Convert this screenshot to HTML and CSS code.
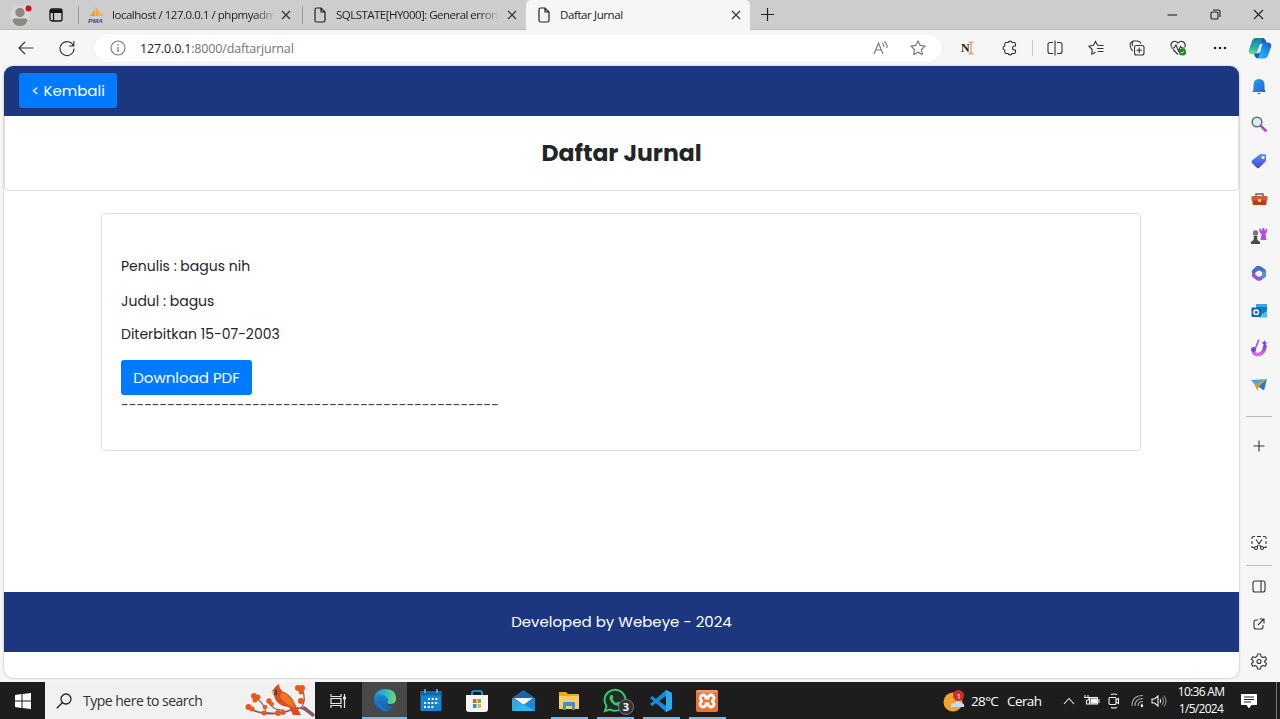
FILE: index.html
```html
<!DOCTYPE html>
<html lang="id">
<head>
<meta charset="utf-8">
<title>Daftar Jurnal</title>
<link rel="stylesheet" href="styles.css">
</head>
<body>
<div class="desktop">
  <header class="tabstrip">
    <div class="profile"><svg width="30" height="28" viewBox="0 0 30 28"><circle cx="15" cy="15" r="10.500" fill="#d9d7d4"/><circle cx="15" cy="11.500" r="4.700" fill="#8b8886"/><path d="M7.500 19.500Q7.500 17.500 10 17.500H20Q22.500 17.500 22.500 19.500Q21 25 15 25T7.500 19.500Z" fill="#8b8886"/><circle cx="23.500" cy="7.500" r="3" fill="#d80d1a"/></svg></div>
    <div class="workspaces"><svg width="14" height="14" viewBox="0 0 14 14" fill="none" stroke="#151515" stroke-width="1.300"><rect x="1" y="1" width="12" height="12" rx="2"/><path d="M1 2.500H13M1 4H13" stroke-width="1.800"/><path d="M4.500 4V13"/></svg></div>
    <div class="tab tab-first">
      <svg class="fav" width="16" height="16" viewBox="0 0 16 16"><path d="M1 9Q5 7 6 2L7 9Z" fill="#e99a2c"/><path d="M7.500 9V0Q12 4 12 9Z" fill="#f5a93c"/><path d="M12.500 9V4Q15 6 15 9Z" fill="#efb35b"/><text x="0" y="15.500" class="pma" textLength="15" lengthAdjust="spacingAndGlyphs">PMA</text></svg>
      <span class="tab-title fade t1">localhost / 127.0.0.1 / phpmyadm</span>
      <svg class="close" width="10" height="10" viewBox="0 0 10 10"><path d="M1 1L9 9M9 1L1 9"/></svg>
    </div>
    <div class="tab tab-second">
      <svg class="doc" width="12" height="16" viewBox="0 0 12 16"><path d="M2.500 1H7L11 5V13.500Q11 15 9.500 15H2.500Q1 15 1 13.500V2.500Q1 1 2.500 1ZM7 1V5H11"/></svg>
      <span class="tab-title fade t2">SQLSTATE[HY000]: General error:</span>
      <svg class="close" width="10" height="10" viewBox="0 0 10 10"><path d="M1 1L9 9M9 1L1 9"/></svg>
    </div>
    <div class="tab tab-active">
      <svg class="doc" width="12" height="16" viewBox="0 0 12 16"><path d="M2.500 1H7L11 5V13.500Q11 15 9.500 15H2.500Q1 15 1 13.500V2.500Q1 1 2.500 1ZM7 1V5H11"/></svg>
      <span class="tab-title t3">Daftar Jurnal</span>
      <svg class="close" width="10" height="10" viewBox="0 0 10 10"><path d="M1 1L9 9M9 1L1 9"/></svg>
    </div>
    <div class="newtab"><svg width="13" height="13" viewBox="0 0 13 13"><path d="M6.500 0V13M0 6.500H13" stroke="#222" stroke-width="1.200"/></svg></div>
    <div class="window-controls">
      <span><svg width="11" height="11" viewBox="0 0 11 11"><path d="M.5 6H10"/></svg></span>
      <span><svg width="11" height="11" viewBox="0 0 11 11"><rect x="1" y="3" width="7" height="7" rx="1.300"/><path d="M3 1H8.500Q10 1 10 2.500V8"/></svg></span>
      <span><svg width="11" height="11" viewBox="0 0 11 11"><path d="M1 1L10 10M10 1L1 10"/></svg></span>
    </div>
  </header>

  <nav class="toolbar">
    <span class="nav-btn back"><svg class="ic" width="16" height="14" viewBox="0 0 16 14"><path d="M15.500 7H1M7 1L1 7L7 13"/></svg></span>
    <span class="nav-btn"><svg class="ic" width="16" height="16" viewBox="0 0 16 16"><path d="M14.500 6A7 7 0 1 0 15 8.500M14.800 1V6H10"/></svg></span>
    <div class="address">
      <svg width="16" height="16" viewBox="0 0 16 16" fill="none" stroke="#777" stroke-width="1.100"><circle cx="8" cy="8" r="7"/><path d="M8 7V12M8 4V5.500" stroke-width="1.300"/></svg>
      <span class="url"><b>127.0.0.1</b>:8000/daftarjurnal</span>
      <svg class="gray read" width="16" height="16" viewBox="0 0 16 16"><path d="M1 14L5.500 3L10 14M2.700 10H8.500M9 3Q11 4 11 7M11 1.500Q14.500 3.500 14 8"/></svg>
      <svg class="gray" width="16" height="16" viewBox="0 0 16 16"><path d="M8 1L10.200 5.400L15 6.100L11.500 9.500L12.300 14.500L8 12.200L3.700 14.500L4.500 9.500L1 6.100L5.800 5.400Z"/></svg>
    </div>
    <div class="actions">
      <span><svg width="16" height="14" viewBox="0 0 16 14"><text x="1" y="11" class="serif-n" textLength="9">N</text><path d="M8.500 1Q11 1 11 3Q11 1 13.500 1M11 3V11M8.500 13Q11 13 11 11Q11 13 13.500 13" fill="none" stroke="#ef9b6c" stroke-width="1.400"/></svg></span>
      <span><svg class="ic" width="15" height="16" viewBox="0 0 15 16"><path d="M4 2.500H6.200A2 2 0 0 1 10 2.500H12Q13.500 2.500 13.500 4V6H12.500A2 2 0 0 0 12.500 10H13.500V12Q13.500 13.500 12 13.500H10A2 2 0 0 1 6.200 13.500H4Q2.800 13.500 2.800 12V10.200A2.200 2.200 0 0 1 2.800 5.900V4Q2.800 2.500 4 2.500Z"/></svg></span>
      <i></i>
      <span><svg class="ic" width="16" height="16" viewBox="0 0 16 16"><path d="M6 2.500H3Q1 2.500 1 4.500V11.500Q1 13.500 3 13.500H6M10 2.500H13Q15 2.500 15 4.500V11.500Q15 13.500 13 13.500H10M8 .5V15.500"/></svg></span>
      <span><svg class="ic" width="16" height="16" viewBox="0 0 16 16"><path d="M10.500 5.200H9.500L7.500 1.500L5.500 5.200L1 6.200L4.200 9.500L3.800 14L7.500 12.200M10.500 5.500H15.500M9 8.500H15.500M10 11.500H15.500"/></svg></span>
      <span><svg class="ic" width="16" height="16" viewBox="0 0 16 16"><rect x="5.500" y="5.500" width="9.500" height="9.500" rx="2"/><path d="M10.200 7.500V13M7.500 10.200H13M12 3.500Q11 1 8.500 1H4L1.500 3Q.5 6 2 8.500L3.500 11M4 1Q2.500 4 4 6"/></svg></span>
      <span><svg class="ic" width="17" height="16" viewBox="0 0 17 16"><path d="M1.500 7Q0 4 2.500 2T8 3Q11 0 13.500 2T15 7M3 9.500L8 14.500M1 8H4L6 5L8.500 11L10.500 6.500L12 8H15"/><circle cx="12.500" cy="12" r="3.600" fill="#16851e" stroke="none"/><path d="M10.800 12L12 13.300L14.200 10.900" stroke="#fff" stroke-width=".9"/></svg></span>
      <span><svg width="14" height="4" viewBox="0 0 14 4" fill="#222"><circle cx="2" cy="2" r="1.300"/><circle cx="7" cy="2" r="1.300"/><circle cx="12" cy="2" r="1.300"/></svg></span>
      <span class="copilot"><svg width="24" height="22" viewBox="0 0 24 22"><defs><linearGradient id="ca" x2="0" y2="1"><stop stop-color="#18809c"/><stop offset=".55" stop-color="#20a9b5"/><stop offset="1" stop-color="#78e07b"/></linearGradient><linearGradient id="cb" x1="1" x2="0" y2="1"><stop stop-color="#1659c8"/><stop offset=".5" stop-color="#2298f0"/><stop offset="1" stop-color="#25c5f6"/></linearGradient></defs><path d="M8 1H15Q17 1 18 5.500H15.500Q13.500 5.500 12.700 8L10.500 14.500Q9.500 17 6 17H3Q0 16.500 1 12.500L4 4Q5 1 8 1Z" fill="url(#ca)"/><path d="M16 21.500H9.500Q7 21 6 17Q9.500 17 10.500 14.500L12.700 8Q13.500 5.500 16 5.500H20.500Q24 6 23 10L20 18.500Q19 21.500 16 21.500Z" fill="url(#cb)"/><path d="M6 16.500H10.500L12 13.500L10.500 20Q10 21.500 8.500 21Q7 20 6 16.500Z" fill="#1457ba"/><path d="M14 1Q17.500 1 18.500 6H14.500L12.500 9Z" fill="#0e62ca"/><path d="M11.500 8L14.500 6L12 15L9 16.500Z" fill="#f4fbff"/></svg></span>
    </div>
  </nav>

  <div class="workspace">
    <main class="page">
      <div class="page-nav"><a class="btn back-link">&lt; Kembali</a></div>
      <section class="title-card"><h1>Daftar Jurnal</h1></section>
      <section class="journal-card">
        <p class="author">Penulis : bagus nih</p>
        <p class="title">Judul : bagus</p>
        <p class="date">Diterbitkan 15-07-2003</p>
        <a class="btn download">Download PDF</a>
        <p class="dashes">-------------------------------------------------</p>
      </section>
      <footer class="footer">Developed by Webeye - 2024</footer>
    </main>

    <aside class="sidebar">
      <span><svg width="16" height="18" viewBox="0 0 16 18"><defs><linearGradient id="bell" x2="1" y2="1"><stop stop-color="#28a7e8"/><stop offset="1" stop-color="#2859df"/></linearGradient></defs><path d="M8 1Q13.500 1 13.500 7V11L14.500 14H1.500L2.500 11V7Q2.500 1 8 1Z" fill="url(#bell)"/><path d="M6 15H10Q8 17.500 6 15Z" fill="#666"/></svg></span>
      <span><svg width="16" height="16" viewBox="0 0 16 16"><path d="M9.500 9.500L11 11" stroke="#666" stroke-width="2"/><path d="M11 11L14.500 14.500" stroke="#bc44ce" stroke-width="2.800" stroke-linecap="round"/><circle cx="6" cy="6" r="4.800" fill="#d7eefa" stroke="#6a6a6a" stroke-width="1.500"/></svg></span>
      <span><svg width="16" height="16" viewBox="0 0 16 16"><defs><linearGradient id="tag" x2="0" y2="1"><stop stop-color="#4c93ff"/><stop offset="1" stop-color="#4b46cf"/></linearGradient></defs><path d="M8 2Q9 1 11 1L15 1.500V7Q15 8 14 9L8.500 14.500Q7 16 5.500 14.500L1 10Q0 8.500 1 7.500Z" fill="url(#tag)"/><circle cx="12" cy="4.500" r="1.700" fill="#f7e5a6"/></svg></span>
      <span><svg width="17" height="16" viewBox="0 0 17 16"><path d="M5 6V3H12V6" fill="none" stroke="#666" stroke-width="1.500"/><rect x=".5" y="5" width="16" height="5" rx="1.200" fill="#d35b38"/><path d="M1.500 9.500H15.500V13Q15.500 14 14 14H3Q1.500 14 1.500 13Z" fill="#b83b18"/><rect x="7" y="8" width="3" height="3" rx=".6" fill="#f1d1a1"/></svg></span>
      <span><svg width="18" height="18" viewBox="0 0 18 18"><path d="M9 2L11 1.500V3.500L12.500 3V1H14.500V3L16 3.500V1.500L17.500 2L16.500 6L15.500 7L16.500 13H10.500L11.500 7L10 6Z" fill="#b54cea"/><circle cx="5.500" cy="6" r="2.700" fill="#777"/><path d="M3 9H8L7 10L7.500 13L10 15V17H1V15L3.500 13L4 10Z" fill="#4b4b4b"/></svg></span>
      <span><svg width="16" height="17" viewBox="0 0 16 17"><path d="M5 1.500Q7 0 10 1.500L15 5L12 8L8 5.500L4 8V12L1 10.500V5.500Z" fill="#446fc9"/><path d="M15 5V11.500L10 15.500H7L6 12L11 10V7Z" fill="#5790e5"/><path d="M1 7.500V11.500L6 15.500H9.500L12 13L8 12L4 9Z" fill="#9c55cf"/><path d="M8 5.500L11 7V10L8 12L5 10V7Z" fill="#f7f7fb"/></svg></span>
      <span><svg width="17" height="16" viewBox="0 0 17 16"><rect x="5" y="1" width="11" height="13" fill="#35a7e7"/><path d="M5 4H16V9L10 14H5Z" fill="#1479c7"/><path d="M8 13L16 8V14.500H8Z" fill="#49c4ef"/><rect x=".5" y="4.500" width="9.500" height="9.500" rx="1" fill="#0869b7"/><circle cx="5.200" cy="9.200" r="2.300" fill="none" stroke="white" stroke-width="1.500"/></svg></span>
      <span><svg width="18" height="18" viewBox="0 0 18 18"><defs><linearGradient id="drop" x2="0" y2="1"><stop stop-color="#7548d6"/><stop offset="1" stop-color="#df69ef"/></linearGradient></defs><path d="M8.500 1.500L6 8" fill="none" stroke="#b164e3" stroke-width="2" stroke-linecap="round"/><path d="M4 10Q2 15 7 15.500T14 11L15 7" fill="none" stroke="url(#drop)" stroke-width="3.700" stroke-linecap="round"/><circle cx="3.500" cy="10.500" r="2.500" fill="#7548d6"/><path d="M14.500 1L15.300 3L17.500 4L15.300 5L14.500 7L13.500 5L11.500 4L13.500 3Z" fill="#7046dd"/></svg></span>
      <span><svg width="16" height="15" viewBox="0 0 16 15"><path d="M0 2L16 1L4 7Z" fill="#43a7e3"/><path d="M7 8.500L16 1L13 12.500Z" fill="#2778d1"/><path d="M3.500 6.500L16 1L7.500 8.500L6.500 13Z" fill="#d09b31"/></svg></span>
      <i class="side-rule"></i>
      <span class="plus"><svg class="ic" width="12" height="12" viewBox="0 0 12 12"><path d="M6 .5V11.500M.5 6H11.500"/></svg></span>
      <div class="side-bottom">
        <span><svg class="ic" width="16" height="16" viewBox="0 0 16 16"><path d="M1 4V2.500Q1 1.500 2.500 1.500H4M6 1.500H10M12 1.500H13.500Q15 1.500 15 3V4M1 6V9M15 6V9M1 11V12.500H3.500M15 11V12.500H12.500M5 4.500L10 12M11 4.500L6 12"/><circle cx="5" cy="13" r="1.500"/><circle cx="11" cy="13" r="1.500"/></svg></span>
        <i class="side-rule"></i>
        <span><svg class="ic" width="14" height="13" viewBox="0 0 14 13"><rect x="1" y="1" width="12" height="11" rx="2"/><path d="M9 1V12"/></svg></span>
        <span><svg class="ic" width="12" height="12" viewBox="0 0 12 12"><path d="M5 2H3Q1 2 1 4V9Q1 11 3 11H8Q10 11 10 9V7M6.500 1H11V5.500M11 1L5 7"/></svg></span>
        <span><svg class="ic" width="16" height="17" viewBox="0 0 16 17"><path d="M6.500 1H9.500L10 3.500L12 4.600L14.300 3.800L15.500 6.300L13.700 8V9L15.500 10.700L14.300 13.200L12 12.400L10 13.500L9.500 16H6.500L6 13.500L4 12.400L1.700 13.200L.5 10.700L2.300 9V8L.5 6.300L1.700 3.800L4 4.600L6 3.500Z" stroke-linejoin="round"/><circle cx="8" cy="8.500" r="2"/></svg></span>
      </div>
    </aside>
  </div>

  <footer class="taskbar">
    <span class="start"><svg width="16" height="16" viewBox="0 0 16 16" fill="#fff"><path d="M0 2L6.500 1V7.500H0ZM7.500 1L16 0V7.500H7.500ZM0 8.500H6.500V15L0 14ZM7.500 8.500H16V16L7.500 15Z"/></svg></span>
    <div class="search">
      <svg width="16" height="16" viewBox="0 0 16 16" fill="none" stroke="#222" stroke-width="1.300"><circle cx="10" cy="6" r="5"/><path d="M6.500 9.500L.8 15.200"/></svg>
      <span>Type here to search</span>
      <svg class="bird" width="70" height="34" viewBox="0 0 70 34"><g fill="none" stroke="#815d60" stroke-linecap="round"><path d="M67 30Q58 22 48 25Q35 31 20 29Q12 29 4 24" stroke-width="1.800"/><path d="M21 29Q20 20 11 14M39 26Q29 27 23 18M56 24Q62 17 57 4" stroke-width="1.200"/><path d="M59 24L68 31" stroke-width="3.500"/></g><g fill="#e9571d"><circle cx="9" cy="12" r="3"/><circle cx="13" cy="13" r="2.500"/><circle cx="10" cy="16" r="2.500"/><circle cx="3.500" cy="23" r="3"/><circle cx="7" cy="25" r="2.500"/><circle cx="20" cy="23" r="2.300"/><circle cx="19" cy="29" r="2.500"/><circle cx="24" cy="17" r="2.700"/><circle cx="27" cy="20" r="2"/><circle cx="33" cy="29" r="3"/><circle cx="38" cy="28.500" r="2.500"/><circle cx="53" cy="4" r="3"/><circle cx="57" cy="4" r="3"/><circle cx="56" cy="8" r="2.500"/><circle cx="56" cy="17" r="3"/></g><path d="M28 7Q29 3 34 0Q34 4 37 7Q46 10 50 20L56 31H48L44 23Q31 22 29 11Z" fill="#df4b20"/><path d="M37 8Q47 12 50 24Q39 20 35 12Z" fill="#f37520"/><path d="M27.500 6.500L32 5.500L32 11L29 11.500Z" fill="#51404b"/><path d="M26 7.500L30 7L28.500 10.500Z" fill="#f4a533"/></svg>
    </div>
    <div class="apps">
      <span><svg width="16" height="16" viewBox="0 0 16 16" fill="none" stroke="#e7e7e7" stroke-width="1.200"><path d="M1 1V3.500H11V1M1 15V12.500H11V15M1 5.500H11V10.500H1ZM14.500 1V15"/><path d="M13 5H16" stroke-width="2.500"/></svg></span>
      <span class="app-active"><svg width="24" height="24" viewBox="0 0 24 24"><defs><linearGradient id="ea" x2="1"><stop stop-color="#208eda"/><stop offset=".6" stop-color="#32bfc4"/><stop offset="1" stop-color="#76dc54"/></linearGradient><linearGradient id="eb" x2="0" y2="1"><stop stop-color="#1a8dd8"/><stop offset="1" stop-color="#1457a7"/></linearGradient></defs><path d="M1 11Q2 1 12 1Q23 1 23 11Q23 16 17 16Q14 16 14 14Q16 12 14 10Q10 5 1 11Z" fill="url(#ea)"/><path d="M1 12Q3 5 10 7Q15 9 15 12Q15 15 13 15Q15 19 21 18Q17 24 11 23Q1 21 1 12Z" fill="url(#eb)"/><path d="M10 9Q6 13 9 18Q12 23 18 21Q14 24 10 23Q3 18 5 12Q7 8 10 9Z" fill="#1976c2"/></svg></span>
      <span><svg width="22" height="23" viewBox="0 0 22 23"><rect x=".5" y="2" width="21" height="20" rx="1" fill="#1685d1"/><rect x=".5" y="2" width="21" height="4.500" fill="#096bb5"/><path d="M5 0V4M17 0V4" stroke="#62c3f0" stroke-width="1.500"/><path d="M8 10H19M4 14H19M4 18H15" stroke="#fff" stroke-width="2" stroke-dasharray="2 1.700"/></svg></span>
      <span><svg width="22" height="24" viewBox="0 0 22 24"><path d="M6 8V4Q6 2 8 2H14Q16 2 16 4V8" fill="none" stroke="#22a3df" stroke-width="1.700"/><path d="M0 6H22V20Q22 23 19 23H3Q0 23 0 20Z" fill="#f5f5f5"/><path d="M7 10H10.500V14H7Z" fill="#e35c32"/><path d="M11.500 10H15V14H11.500Z" fill="#77b832"/><path d="M7 15H10.500V19H7Z" fill="#2a91d8"/><path d="M11.500 15H15V19H11.500Z" fill="#eab530"/></svg></span>
      <span><svg width="23" height="22" viewBox="0 0 23 22"><path d="M0 8L11.500 0L23 8V21H0Z" fill="#1668ae"/><path d="M2 8H21L11.500 15Z" fill="#f2f8fb"/><path d="M0 8L11.500 15L0 21Z" fill="#31a7e6"/><path d="M23 8L11.500 15L23 21Z" fill="#178bd8"/><path d="M0 21L11.500 14L23 21Z" fill="#39b5ed"/></svg></span>
      <span class="running"><svg width="22" height="18" viewBox="0 0 22 18"><path d="M1 0H8L10 2H21V17H1Z" fill="#e7a92f"/><path d="M1 4H21V17H1Z" fill="#f9ce62"/><path d="M5 18V11Q5 10 6 10H16Q17 10 17 11V18H14V14H8V18Z" fill="#408fd0"/></svg></span>
      <span class="running wa"><svg width="24" height="24" viewBox="0 0 24 24"><path d="M2 22L3.500 17Q1.500 14 1.500 11A10.500 10.500 0 1 1 7 20.500Z" fill="#202b24" stroke="#35c96a" stroke-width="2"/><path d="M8 6Q6 7 6.500 10Q9 16 15 17Q17 17 18 14L15 12.500L13.500 14Q10.500 13 9.500 10L10.500 8.500L9.500 6Z" fill="#35c96a"/></svg><b class="badge">3</b></span>
      <span class="running code"><svg width="24" height="24" viewBox="0 0 24 24"><path d="M17 1L23 4V20L17 23L1 9L3 7L17 17V7L3 17L1 15Z" fill="#168bd5"/><path d="M17 1L23 4V20L17 23Z" fill="#31a7ed"/></svg></span>
      <span class="running"><svg width="22" height="22" viewBox="0 0 22 22"><rect width="22" height="22" rx="2" fill="#ed742e"/><path d="M0 2Q0 0 2 0H20Q22 0 22 2L12 3Z" fill="#ef9b68"/><path d="M7.500 5A3 3 0 0 1 10 8H12A3 3 0 1 1 15 11A3 3 0 1 1 12 14H10A3 3 0 1 1 7 11A3 3 0 0 1 7.500 5Z" fill="none" stroke="#fff" stroke-width="2.800"/></svg></span>
    </div>
    <div class="tray">
      <svg class="weather" width="22" height="22" viewBox="0 0 22 22"><circle cx="10" cy="12" r="9.500" fill="#f4a32d"/><path d="M8 18Q7 13 12 13Q15 9 18 13Q22 13 21 17H9Z" fill="#c6dcf5"/><circle cx="15.500" cy="5.500" r="5.500" fill="#c9302c"/><text x="13.500" y="9" class="alert">1</text></svg>
      <span class="temp">28°C</span><span class="cond">Cerah</span>
      <svg class="tray-ic chev" width="12" height="8" viewBox="0 0 12 8"><path d="M1 7L6 1.500L11 7"/></svg>
      <svg class="tray-ic battery" width="16" height="13" viewBox="0 0 16 13"><path d="M1 1V3M4 1V3M0 3.500H5V5Q5 6 2.500 6.500V10H5"/><rect x="5.500" y="3.500" width="8" height="6.500"/><rect x="7" y="5" width="6" height="4" fill="#fff"/><path d="M15 5V9"/></svg>
      <svg class="tray-ic meet" width="12" height="16" viewBox="0 0 12 16"><path d="M3 1.500Q6 .5 9 1.500M3 14.500Q6 15.500 9 14.500"/><rect x="1" y="4.500" width="7" height="7" rx="1"/><path d="M8 7L10.500 5.500V10.500L8 9"/></svg>
      <svg class="tray-ic wifi" width="14" height="14" viewBox="0 0 14 14"><path d="M10 12A2 2 0 0 1 12 10M7 12Q7 7.500 12 7.500M4 12Q4 4.500 12 4.500M1 12Q1 1.500 12 1.500" stroke="#aaa"/><circle cx="11" cy="12" r="1.200" fill="#fff" stroke="none"/></svg>
      <svg class="tray-ic sound" width="16" height="14" viewBox="0 0 16 14"><path d="M1 5H3.500L7 2V12L3.500 9H1ZM9 5Q10.500 7 9 9"/><path d="M11 3Q14 7 11 11M13 1.500Q17 7 13 12.500" stroke="#888"/></svg>
      <div class="clock"><span class="time">10:36 AM</span><span class="day">1/5/2024</span></div>
      <svg class="notice" width="16" height="16" viewBox="0 0 16 16"><path d="M0 1H16V12H10.500L8 15.500L5.500 12H0Z" fill="#fff"/><path d="M3 4H13M3 6.500H13M3 9H10" stroke="#222"/></svg>
      <i class="show-desktop"></i>
    </div>
  </footer>
</div>
</body>
</html>
```

FILE: styles.css
```css
* { box-sizing: border-box; }
body { margin: 0; overflow: hidden; font-family: "Open Sans", "Noto Sans", sans-serif; color: #222; }
svg { display: block; flex: none; overflow: visible; }
.desktop { width: 1280px; height: 719px; display: grid; grid-template-rows: 30px 36px 616px 37px; background: #f6f6f6; }

.tabstrip { display: flex; align-items: center; background: #cdcdcd; border-bottom: 1px solid #bcbcbc; }
.profile { width: 42px; padding-left: 5px; }
.workspaces { width: 36px; padding-left: 7px; }
.tab { display: flex; align-items: center; height: 30px; }
.tab-first { width: 224px; padding-left: 10px; background: linear-gradient(#999, #999) left center / 1px 18px no-repeat; }
.tab-second { width: 224px; padding-left: 12px; background: linear-gradient(#999, #999) left center / 1px 18px no-repeat; }
.tab-active { width: 224px; padding-left: 12px; background: #f6f6f6; border-radius: 5px 5px 0 0; }
.pma { font: italic bold 6px "Liberation Sans", sans-serif; fill: #3b4f88; }
.tab-title { font-size: 11.5px; white-space: nowrap; line-height: 18px; }
.t1 { width: 162px; margin: 0 7px 0 8px; letter-spacing: -.47px; }
.t2 { width: 162px; margin: 0 9px 0 10px; letter-spacing: -.52px; }
.t3 { width: 162px; margin: 0 9px 0 10px; letter-spacing: -.4px; }
.fade { mask-image: linear-gradient(90deg, #000 88%, rgba(0, 0, 0, .15)); }
.close { fill: none; stroke: #333; stroke-width: 1.2; }
.doc { fill: none; stroke: #222; stroke-width: 1.2; }
.newtab { padding-left: 11px; }
.window-controls { display: flex; margin-left: auto; }
.window-controls span { width: 43px; display: grid; place-items: center; }
.window-controls svg { fill: none; stroke: #222; stroke-width: 1.1; }

.toolbar { display: flex; align-items: center; background: #f6f6f6; }
.ic { fill: none; stroke: #333; stroke-width: 1.1; }
.nav-btn { width: 41px; display: grid; place-items: center; }
.back { margin-left: 5px; }
.address { width: 848px; height: 28px; margin-left: 7px; padding: 0 16px; display: flex; align-items: center; background: #fff; border-radius: 14px; box-shadow: 0 0 2px #ddd; }
.url { margin-left: 14px; font-size: 12.5px; color: #747474; letter-spacing: -.17px; }
.url b { color: #222; font-weight: 400; }
.gray { fill: none; stroke: #777; stroke-width: 1.1; }
.read { margin-left: auto; margin-right: 21px; }
.actions { display: flex; align-items: center; margin-left: 5.5px; }
.actions span { width: 41.3px; display: grid; place-items: center; }
.actions i { width: 1px; height: 16px; margin: 0 1.5px; background: #ccc; }
.actions .copilot { width: 38px; }
.serif-n { font: bold 12px "Liberation Serif", serif; fill: #222; }

.workspace { display: grid; grid-template-columns: 1235px 40px; padding-left: 4px; background: #f6f6f6; }
.page { display: flex; flex-direction: column; height: 612px; background: #fff; border-radius: 9px; overflow: hidden; box-shadow: 0 0 2px #999; font-family: Poppins, Inter, sans-serif; color: #212529; }
.page-nav { height: 50px; flex: none; background: #1c377f; padding: 7px 15px; display: flex; }
.btn { display: flex; align-items: center; justify-content: center; background: #007bff; color: #fff; border-radius: 3px; font-size: 15px; height: 35px; padding-bottom: 1px; white-space: nowrap; }
.back-link { width: 98px; }
.title-card { height: 75px; flex: none; border: 1px solid #dfdfdf; border-top: 0; border-radius: 0 0 4px 4px; display: grid; place-items: center; }
h1 { margin: 0; font-size: 23.5px; line-height: 32px; font-weight: 700; }
.journal-card { width: 1040px; height: 238px; flex: none; margin: 22px 0 0 97px; border: 1px solid #e1e1e1; border-radius: 4px; padding: 41px 19px 0; font-size: 14px; }
.journal-card p { margin: 0; line-height: 22px; white-space: nowrap; }
.journal-card .title { margin-top: 13px; }
.journal-card .date { margin-top: 11px; }
.download { width: 131px; margin-top: 15px; }
.journal-card .dashes { color: #444; font-size: 14px; line-height: 21px; }
.footer { height: 60px; flex: none; margin-top: 141px; padding-bottom: 2px; background: #1c377f; color: #fff; display: grid; place-items: center; font-size: 15px; }

.sidebar { display: flex; flex-direction: column; align-items: center; padding-top: 2px; }
.sidebar span { height: 37.4px; display: grid; place-items: center; flex: none; }
.side-rule { width: 26px; height: 1px; background: #bbb; flex: none; }
.sidebar > .side-rule { margin-top: 11px; }
.sidebar .plus { margin-top: 11px; }
.side-bottom { display: flex; flex-direction: column; align-items: center; margin-top: auto; padding-bottom: 2px; }
.side-bottom .side-rule { margin: 3px 0 2px; }

.taskbar { background: #1d1d1d; display: flex; color: #fff; }
.start { width: 45px; display: grid; place-items: center; }
.search { width: 270px; background: #f1f1f1; color: #333; display: flex; align-items: center; padding-left: 11px; font-size: 14px; }
.search span { margin-left: 11px; letter-spacing: -.5px; white-space: nowrap; }
.bird { margin-left: auto; }
.apps { display: flex; }
.apps > span { width: 46px; display: grid; place-items: center; position: relative; }
.apps > span:first-child { width: 45px; margin-right: 2px; }
.apps > .app-active { width: 45px; margin-right: 1px; background: #484848; border-bottom: 2px solid #76b9ed; }
.running { background: linear-gradient(#76b9ed, #76b9ed) center bottom / 37px 2px no-repeat; }
.badge { position: absolute; left: 26px; top: 17px; width: 16px; height: 16px; border: 1px solid #777; border-radius: 50%; background: #343434; font-size: 11px; line-height: 14px; text-align: center; }
.tray { display: flex; align-items: center; margin-left: auto; width: 337px; font-size: 13.5px; white-space: nowrap; }
.weather { margin-right: 6px; }
.alert { font-size: 8px; fill: #fff; }
.temp { width: 36px; letter-spacing: -.65px; }
.cond { width: 56px; letter-spacing: -.6px; }
.tray-ic { fill: none; stroke: #eee; stroke-width: 1.1; }
.battery { margin-left: 9px; }
.meet { margin-left: 8px; }
.wifi { margin-left: 11px; }
.sound { margin-left: 6px; }
.clock { width: 68px; display: flex; flex-direction: column; align-items: center; margin-top: -1px; font-size: 12px; line-height: 17px; letter-spacing: -.7px; }
.notice { margin-left: 6px; }
.show-desktop { width: 1px; height: 37px; margin-left: 19px; background: #777; }
```
